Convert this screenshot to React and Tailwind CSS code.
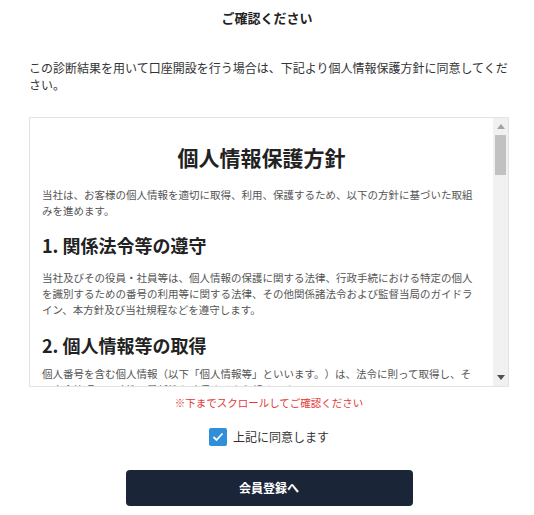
import React, { useState } from 'react';

const jp = { fontFamily: '"Noto Sans CJK JP", "Noto Sans", sans-serif' };

function FakeScrollbar() {
  return (
    <div className="w-[15px] shrink-0 bg-[#f1f1f1] flex flex-col items-center">
      <div className="h-[17px] w-full flex items-center justify-center">
        <svg width="8" height="5" viewBox="0 0 8 5"><path d="M4 0 L8 5 L0 5 Z" fill="#a3a3a3" /></svg>
      </div>
      <div className="w-[11px] h-[40px] bg-[#c1c1c1]" />
      <div className="flex-1" />
      <div className="h-[17px] w-full flex items-center justify-center">
        <svg width="8" height="5" viewBox="0 0 8 5"><path d="M0 0 L8 0 L4 5 Z" fill="#505050" /></svg>
      </div>
    </div>
  );
}

export default function App() {
  const [agreed, setAgreed] = useState(true);

  return (
    <div className="w-[534px] h-[515px] bg-white text-[#222] [text-spacing-trim:space-all]" style={jp}>
      {/* ── 見出し ── */}
      <h2 className="pt-[8px] text-center text-[13px] font-bold leading-[20px] text-[#222]">ご確認ください</h2>

      <div className="ml-[29px] w-[480px]">
        <p className="mt-[31px] text-[12px] leading-[17px] text-[#333]">
          この診断結果を用いて口座開設を行う場合は、下記より個人情報保護方針に同意してください。
        </p>

        {/* ── ポリシー本文 ── */}
        <div className="mt-[24px] h-[270px] border border-[#e3e3e3] flex overflow-hidden">
          <div className="flex-1 overflow-hidden pl-[12px] pr-[12px]">
            <h1 className="pt-[25px] text-center text-[21px] font-bold leading-[28px] text-[#222]">個人情報保護方針</h1>
            <p className="mt-[16px] text-[10.5px] leading-[16px] text-[#555]">
              当社は、お客様の個人情報を適切に取得、利用、保護するため、以下の方針に基づいた取組みを進めます。
            </p>
            <h3 className="mt-[14px] text-[18px] font-bold leading-[24px] text-[#222]">1. 関係法令等の遵守</h3>
            <p className="mt-[13px] text-[10.5px] leading-[16px] text-[#555]">
              当社及びその役員・社員等は、個人情報の保護に関する法律、行政手続における特定の個人を識別するための番号の利用等に関する法律、その他関係諸法令および監督当局のガイドライン、本方針及び当社規程などを遵守します。
            </p>
            <h3 className="mt-[15px] text-[18px] font-bold leading-[24px] text-[#222]">2. 個人情報等の取得</h3>
            <p className="mt-[9px] text-[10.5px] leading-[16px] text-[#555]">
              個人番号を含む個人情報（以下「個人情報等」といいます。）は、法令に則って取得し、その安全管理、正確性・最新性を確保するよう努めます。
            </p>
          </div>
          <FakeScrollbar />
        </div>

        <p className="mt-[9px] text-center text-[10.5px] leading-[14px] text-[#e53935]">※下までスクロールしてご確認ください</p>

        {/* ── 同意チェック ── */}
        <label className="mt-[18px] flex items-center justify-center gap-[6px] cursor-pointer">
          <span
            onClick={() => setAgreed(!agreed)}
            className={`w-[18px] h-[18px] rounded-[2px] flex items-center justify-center ${agreed ? 'bg-[#2f8fd8]' : 'bg-white border border-[#999]'}`}
          >
            {agreed && (
              <svg width="12" height="10" viewBox="0 0 12 10">
                <path d="M1.5 5 L4.5 8 L10.5 1.5" fill="none" stroke="white" strokeWidth="1.8" />
              </svg>
            )}
          </span>
          <span className="text-[12px] leading-[18px] text-[#333]">上記に同意します</span>
        </label>

        {/* ── ボタン ── */}
        <div className="mt-[24px] flex justify-center">
          <button className="w-[287px] h-[36px] rounded-[4px] bg-[#1a2538] text-white text-[12px] font-bold">
            会員登録へ
          </button>
        </div>
      </div>
    </div>
  );
}
